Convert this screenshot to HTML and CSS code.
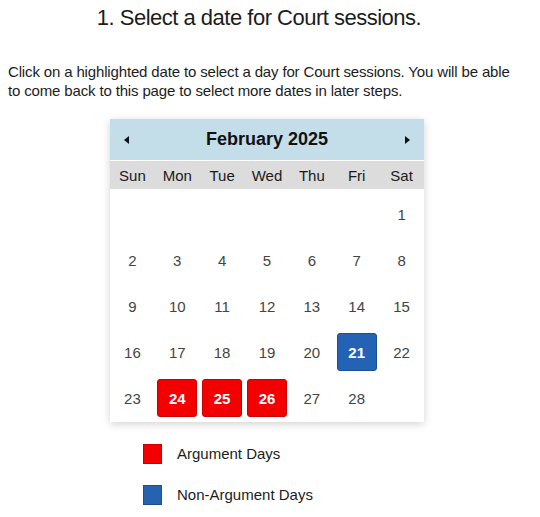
FILE: index.html
```html
<!DOCTYPE html>
<html>
<head>
<meta charset="utf-8">
<link rel="stylesheet" href="styles.css">
</head>
<body>
<h1 class="title">1. Select a date for Court sessions.</h1>
<p class="intro">Click on a highlighted date to select a day for Court sessions. You will be able to come back to this page to select more dates in later steps.</p>
<div class="calendar">
  <div class="cal-head">
    <span class="arrow prev"></span>
    <span class="month">February 2025</span>
    <span class="arrow next"></span>
  </div>
  <div class="weekdays">
    <span>Sun</span><span>Mon</span><span>Tue</span><span>Wed</span><span>Thu</span><span>Fri</span><span>Sat</span>
  </div>
  <div class="days">
    <span></span><span></span><span></span><span></span><span></span><span></span><span>1</span>
    <span>2</span><span>3</span><span>4</span><span>5</span><span>6</span><span>7</span><span>8</span>
    <span>9</span><span>10</span><span>11</span><span>12</span><span>13</span><span>14</span><span>15</span>
    <span>16</span><span>17</span><span>18</span><span>19</span><span>20</span><span><b class="mark blue">21</b></span><span>22</span>
    <span>23</span><span><b class="mark red">24</b></span><span><b class="mark red">25</b></span><span><b class="mark red">26</b></span><span>27</span><span>28</span><span></span>
  </div>
</div>
<div class="legend">
  <div class="legend-item"><span class="swatch red"></span>Argument Days</div>
  <div class="legend-item"><span class="swatch blue"></span>Non-Argument Days</div>
</div>
</body>
</html>
```
FILE: styles.css
```css
html, body { background: #fff; }
body {
  margin: 0;
  padding: 0 8px;
  font-family: "Liberation Sans", Arial, sans-serif;
  color: #1c1c1c;
}
.title {
  margin: 0;
  padding: 4px 22px 0 0;
  font-size: 22px;
  font-weight: 400;
  letter-spacing: -0.5px;
  line-height: 28px;
  text-align: center;
}
.intro {
  max-width: 506px;
  margin: 31px 0 0;
  font-size: 15px;
  letter-spacing: -0.15px;
  line-height: 18.5px;
}
.calendar {
  width: 314px;
  margin: 19px 0 0 102px;
  background: #fff;
  box-shadow: 0 2px 8px rgba(0,0,0,0.18);
}
.cal-head {
  height: 41px;
  background: #c3dde9;
  display: flex;
  align-items: center;
  justify-content: space-between;
  padding: 0 14px;
}
.month {
  font-size: 18px;
  font-weight: 700;
  color: #111;
}
.arrow {
  width: 0; height: 0;
  border-top: 4px solid transparent;
  border-bottom: 4px solid transparent;
}
.arrow.prev { border-right: 5px solid #111; }
.arrow.next { border-left: 5px solid #111; }
.weekdays {
  height: 28px;
  margin-top: 1px;
  background: #dcdcdc;
  display: grid;
  grid-template-columns: repeat(7, 1fr);
  align-items: center;
  text-align: center;
  font-size: 15px;
  color: #1a1a1a;
}
.days {
  display: grid;
  grid-template-columns: repeat(7, 1fr);
  grid-auto-rows: 46px;
  padding: 2px 0 1px;
  font-size: 15px;
  color: #444;
}
.days span {
  display: flex;
  align-items: center;
  justify-content: center;
}
.mark {
  width: 38px;
  height: 36px;
  display: flex;
  align-items: center;
  justify-content: center;
  color: #fff;
  font-weight: 700;
  border-radius: 3px;
}
.mark.red { background: #f40000; border: 1px solid #c80000; }
.mark.blue { background: #2463b3; border: 1px solid #1c4f93; }
.legend {
  margin: 21px 0 0 135px;
  font-size: 15px;
  color: #1c1c1c;
}
.legend-item {
  display: flex;
  align-items: center;
  height: 21px;
  margin-bottom: 20px;
}
.swatch {
  width: 19px;
  height: 20px;
  margin-right: 15px;
  box-sizing: border-box;
}
.swatch.red { background: #f40000; border: 1px solid #c00; }
.swatch.blue { background: #2563b1; border: 1px solid #1d4f8f; }
```
